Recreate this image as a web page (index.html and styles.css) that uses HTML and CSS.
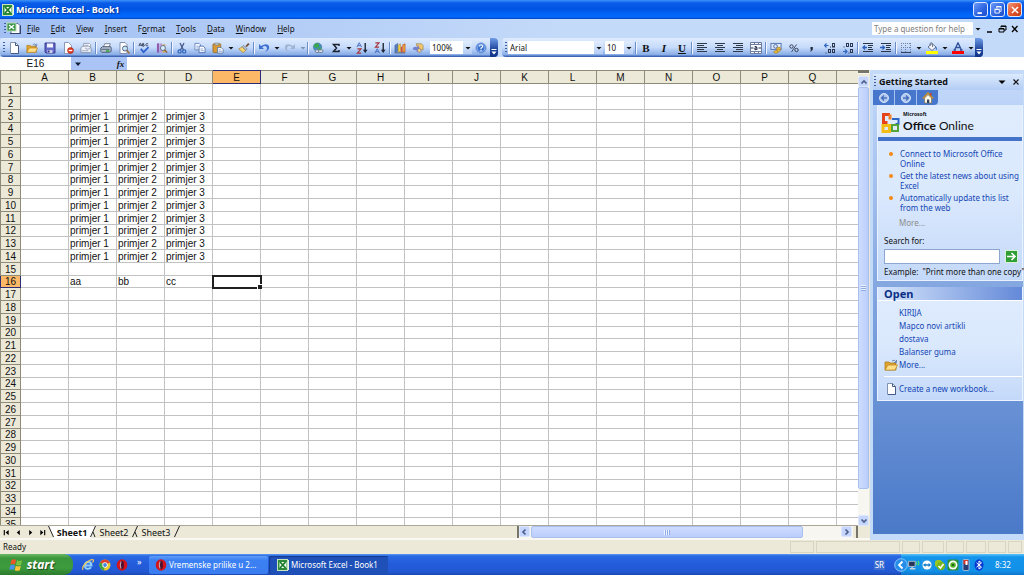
FILE: index.html
```html
<!DOCTYPE html>
<html lang="en">
<head>
<meta charset="utf-8">
<title>Microsoft Excel - Book1</title>
<link rel="stylesheet" href="styles.css">
</head>
<body>
<svg class="defs" aria-hidden="true">
  <symbol id="excel" viewBox="0 0 12 12"><rect x="1" y="1" width="11" height="10" fill="#e8f4e0"/><rect x=".5" y=".5" width="10" height="11" fill="#2e8b3a" stroke="#c6e4bd"/><path d="M2.500 3h7v6h-7z" fill="#f3fff0"/><path d="M3 3l5.500 6M8.500 3L3 9" stroke="#1c7a2a" stroke-width="1.800"/></symbol>
  <symbol id="page" viewBox="0 0 12 12"><path d="M2.500 .5h5l3 3v8h-8z" fill="#fff" stroke="#8290b0"/><path d="M7.500 .5v3h3M10.500 4v7.500h-7.500" fill="none" stroke="#455a86"/></symbol>
  <symbol id="folder" viewBox="0 0 14 12"><path d="M1 3h4l1 1h6v7H1z" fill="#dfa430" stroke="#a87410" stroke-width=".7"/><path d="M1 11l3-5h9.500l-2.500 5z" fill="#ffe08a" stroke="#b98118" stroke-width=".7"/><path d="M8 2q3-2 4 1M12.500 1v2.500h-2.500" fill="none" stroke="#56719e" stroke-width=".8"/></symbol>
  <symbol id="down" viewBox="0 0 6 6"><path d="M.5 2h5L3 4.500z" fill="currentColor"/></symbol>
  <symbol id="opera" viewBox="0 0 12 12"><ellipse cx="6" cy="6" rx="5.300" ry="5.700" fill="#d4141c"/><ellipse cx="6" cy="6" rx="1.900" ry="4.200" fill="#4a1230"/><path d="M5 2.500q-1.500 3.500 0 7" stroke="#fff" stroke-width=".7" fill="none"/></symbol>
  <symbol id="chev" viewBox="0 0 8 8"><path d="M1.500 5.500L4 3l2.500 2.500" fill="none" stroke="#4a5f8c" stroke-width="1.700"/></symbol>
  <symbol id="printer" viewBox="0 0 14 12"><path d="M4 5l1.500-4H12l-1.500 4z" fill="#fff" stroke="#5c6b88" stroke-width=".9"/><path d="M1 6l2-1.500h9.500l.5 1.500v4l-2 1H2l-1-1z" fill="#b4c0d0" stroke="#3f506c" stroke-width="1"/><path d="M2 7.500h9" stroke="#43546e"/></symbol>
</svg>

<div class="window">
  <header class="titlebar">
    <svg class="i12"><use href="#excel"/></svg>
    <h1>Microsoft Excel - Book1</h1>
    <button class="cap" aria-label="Minimize"><svg viewBox="0 0 16 16"><path d="M4 11.500h5" stroke="#fff" stroke-width="2"/></svg></button>
    <button class="cap" aria-label="Restore"><svg viewBox="0 0 16 16"><path d="M6.500 6V4.500h5v5H10M4.500 7.500h5v4h-5zM4 7h6M6 4h6" fill="none" stroke="#fff"/></svg></button>
    <button class="cap close" aria-label="Close"><svg viewBox="0 0 16 16"><path d="M4.500 4.500l7 7M11.500 4.500l-7 7" stroke="#fff" stroke-width="1.800"/></svg></button>
  </header>

  <nav class="menubar">
    <span class="grip"></span>
    <svg class="doc" viewBox="0 0 15 13"><path d="M5 1.500h7l2 2v8H5z" fill="#fff" stroke="#566a94"/><rect x="1" y="1" width="9" height="8" fill="#3b9447" stroke="#b8dcb4"/><path d="M3 3l5 4M8 3L3 7" stroke="#fff" stroke-width="1.400"/><path d="M4 11.500h10.500v-8" fill="none" stroke="#33476e" stroke-width="1.200"/></svg>
    <button><u>F</u>ile</button><button><u>E</u>dit</button><button><u>V</u>iew</button><button><u>I</u>nsert</button><button>F<u>o</u>rmat</button><button><u>T</u>ools</button><button><u>D</u>ata</button><button><u>W</u>indow</button><button><u>H</u>elp</button>
    <div class="combo ask"><input aria-label="Type a question for help" placeholder="Type a question for help"><button aria-label="Open help list"><svg><use href="#down"/></svg></button></div>
    <button class="mdi" aria-label="Minimize workbook"><svg viewBox="0 0 10 10"><path d="M3 8h5" stroke="#000" stroke-width="1.500"/></svg></button>
    <button class="mdi" aria-label="Restore workbook"><svg viewBox="0 0 10 10"><path d="M4 3.500V2h5v4H7M2 4.500h5V8H2zM2 5h5M4 2.400h5" fill="none" stroke="#000"/></svg></button>
    <button class="mdi" aria-label="Close workbook"><svg viewBox="0 0 10 10"><path d="M2 2l5.500 6M7.500 2L2 8" stroke="#000" stroke-width="1.300"/></svg></button>
  </nav>

  <div class="toolbars">
    <div class="toolbar standard">
      <span class="grip"></span>
      <button aria-label="New"><svg><use href="#page"/></svg></button>
      <button aria-label="Open"><svg><use href="#folder"/></svg></button>
      <button aria-label="Save"><svg viewBox="0 0 12 12"><path d="M1 1h10v10H2l-1-1z" fill="#6468c8" stroke="#3a3c90"/><path d="M3 1.500h6v4H3z" fill="#f1f3ff"/><path d="M3.500 8h5v3h-5z" fill="#c9cdee"/><path d="M4 8.500h1.500v2H4z" fill="#30336f"/></svg></button>
      <button aria-label="Permission"><svg viewBox="0 0 12 12"><path d="M2.500.5h4l3 3v8h-7z" fill="#fff" stroke="#8896b4"/><circle cx="8.500" cy="8.500" r="3" fill="#dc3a24" stroke="#a02010" stroke-width=".5"/><path d="M6.700 8.500h3.600" stroke="#fff" stroke-width="1.300"/></svg></button>
      <button aria-label="E-mail"><svg viewBox="0 0 13 12"><path d="M4 4V1h6l1.500 1.500V8H4z" fill="#fff" stroke="#7d8aa6" stroke-width=".8"/><path d="M1 5.500l2-1.500h7l2 2v4l-1 1H1z" fill="#eef1f7" stroke="#7784a2" stroke-width=".8"/><path d="M2 9h7M5 3h4M5.500 6l3 1.500L11 6" stroke="#8491ac" stroke-width=".8" fill="none"/></svg></button>
      <i class="sep"></i>
      <button aria-label="Print"><svg viewBox="0 0 14 12"><use href="#printer" width="14" height="12"/><path d="M7 9.500h4" stroke="#31a435" stroke-width="1.800"/></svg></button>
      <button aria-label="Print Preview"><svg viewBox="0 0 12 12"><path d="M2 .5h5l2 2v9H2z" fill="#fff" stroke="#8390ad"/><circle cx="7" cy="6.500" r="2.500" fill="#c9e5f5" stroke="#536683"/><path d="M9 8.500l2.500 3" stroke="#a26c32" stroke-width="1.500"/></svg></button>
      <i class="sep"></i>
      <button aria-label="Spelling"><svg viewBox="0 0 13 12"><path d="M1 4l1-3h1l1 3M1.500 3h2M5 1v3h1.500q1-1 0-1.500H5h1q1-1 0-1.500H5M11 1.500q-2.500-1-2.500 1t2.500 1" fill="none" stroke="#343c56" stroke-width=".9"/><path d="M3 7l3 3.500L11.500 5" fill="none" stroke="#2f62cf" stroke-width="1.900"/></svg></button>
      <button aria-label="Research"><svg viewBox="0 0 13 12"><path d="M1 1h2.500v10H1z" fill="#8e5db0"/><path d="M4 1h2.500v10H4z" fill="#c09ad5"/><path d="M7 2h3v9H7z" fill="#d2a457"/><circle cx="7.500" cy="6" r="2.700" fill="#d8effb" stroke="#587090"/><path d="M9.500 8l2.500 3" stroke="#8e602d" stroke-width="1.500"/></svg></button>
      <i class="sep"></i>
      <button aria-label="Cut"><svg viewBox="0 0 12 12"><path d="M4 1l3.500 7M8 1L4.500 8" stroke="#46598a" stroke-width="1.300"/><circle cx="3.600" cy="9.400" r="1.600" fill="none" stroke="#2d63ba" stroke-width="1.200"/><circle cx="8.200" cy="9.400" r="1.600" fill="none" stroke="#2d63ba" stroke-width="1.200"/></svg></button>
      <button aria-label="Copy"><svg viewBox="0 0 13 12"><path d="M1 1h4.500L7 2.500V8H1z" fill="#f6f9ff" stroke="#5f7cb9" stroke-width=".9"/><path d="M5.500 4H10l2 2v5H5.500z" fill="#fff" stroke="#4769ad" stroke-width=".9"/><path d="M7 7h3M7 9h4M2.500 4h2M2.500 6h2" stroke="#6f8dca" stroke-width=".8"/></svg></button>
      <button aria-label="Paste"><svg viewBox="0 0 13 12"><rect x="1" y="1.500" width="8.500" height="9.500" rx="1" fill="#d69b38" stroke="#8b641e" stroke-width=".8"/><path d="M3 .7h4.500v2H3z" fill="#d8dbe2" stroke="#636873" stroke-width=".6"/><path d="M6 5.500h4l2 2v4H6z" fill="#fff" stroke="#526c9e" stroke-width=".8"/><path d="M7 8h3M7 9.700h4" stroke="#6a84ba" stroke-width=".7"/></svg></button>
      <button class="drop" aria-label="Paste options"><svg><use href="#down"/></svg></button>
      <button aria-label="Format Painter"><svg viewBox="0 0 13 12"><path d="M8 4l3-3.500L12.500 2 9.500 5z" fill="#704a2c"/><path d="M6 3l4 4-1.500 1.500-4-4z" fill="#b8bfca" stroke="#65708a" stroke-width=".6"/><path d="M4.300 4.800l4 4L5.500 11 .8 7z" fill="#f6d46e" stroke="#a28333" stroke-width=".7"/></svg></button>
      <i class="sep"></i>
      <button aria-label="Undo"><svg viewBox="0 0 12 12"><path d="M1 2v5h5L4.200 5.200Q8 2.500 9 6q.5 2-2 4 5-2 4-6Q9 .5 3 4z" fill="#3d70cf"/></svg></button>
      <button class="drop" aria-label="Undo list"><svg><use href="#down"/></svg></button>
      <button aria-label="Redo" disabled><svg viewBox="0 0 12 12"><path d="M11 2v5H6l1.800-1.800Q4 2.500 3 6q-.5 2 2 4Q0 8 1 4 3 .5 9 4z" fill="#a0b3d2"/></svg></button>
      <button class="drop dim" aria-label="Redo list" disabled><svg><use href="#down"/></svg></button>
      <i class="sep"></i>
      <button aria-label="Insert Hyperlink"><svg viewBox="0 0 13 12"><circle cx="6" cy="5" r="4.500" fill="#408bcb" stroke="#376c76" stroke-width=".6"/><path d="M3 1.500l4-.5 1 3-3 2-3-1zM6 6l3-1 1 2-3 2z" fill="#39a94b"/><rect x="3.500" y="8" width="4.500" height="2.800" rx="1.400" fill="#dfe7f2" stroke="#63748a"/><rect x="7" y="8" width="5" height="2.800" rx="1.400" fill="#dfe7f2" stroke="#63748a"/></svg></button>
      <button aria-label="AutoSum"><svg viewBox="0 0 12 12"><path d="M9 4V2.500H3.500L6.500 6l-3 3.500H9V8" fill="none" stroke="#1d2430" stroke-width="1.500"/></svg></button>
      <button class="drop" aria-label="AutoSum options"><svg><use href="#down"/></svg></button>
      <button aria-label="Sort Ascending"><svg viewBox="0 0 13 13"><path d="M1 5.500L3.500.8 6 5.500M2 4h3" fill="none" stroke="#3f68b8"/><path d="M1.500 7.500h4l-4 4.500h4" fill="none" stroke="#a53539" stroke-width="1.200"/><path d="M10 1v9" stroke="#1f2736" stroke-width="1.500"/><path d="M7.500 8.500h5L10 12z" fill="#1f2736"/></svg></button>
      <button aria-label="Sort Descending"><svg viewBox="0 0 13 13"><path d="M1 12l2.500-4.700L6 12M2 10.500h3" fill="none" stroke="#3f68b8"/><path d="M1.500 1h4l-4 4.500h4" fill="none" stroke="#a53539" stroke-width="1.200"/><path d="M10 1v9" stroke="#1f2736" stroke-width="1.500"/><path d="M7.500 8.500h5L10 12z" fill="#1f2736"/></svg></button>
      <i class="sep"></i>
      <button aria-label="Chart Wizard"><svg viewBox="0 0 13 12"><path d="M1 3l3-2v8.500L1 11z" fill="#557dc4" stroke="#32518c" stroke-width=".5"/><path d="M4.500 3L7 1.500V10H4.500z" fill="#f6cf45" stroke="#9a7c18" stroke-width=".5"/><path d="M7.500 5L9 4v7H7.500z" fill="#d94d34"/><path d="M9.500 2.500l2.500-1v9H9.500z" fill="#f0ad38" stroke="#b63b25" stroke-width=".6"/><path d="M1 11.300h11" stroke="#555f75"/></svg></button>
      <button aria-label="Drawing"><svg viewBox="0 0 14 12"><path d="M5 1h6l2 2v5H7z" fill="#efc669" stroke="#87713f" stroke-width=".6"/><path d="M7 2l3 8H5z" fill="#857ac8"/><ellipse cx="4" cy="6.500" rx="3" ry="2" fill="#6f82d1"/><path d="M6 8l3-2 2 4-3 1.500z" fill="#f2d48a" stroke="#6a5f75" stroke-width=".6"/></svg></button>
      <div class="combo zoom"><input aria-label="Zoom" value="100%"><button aria-label="Zoom list"><svg><use href="#down"/></svg></button></div>
      <button aria-label="Help"><svg viewBox="0 0 12 12"><circle cx="6" cy="6" r="5.200" fill="#3a72cf" stroke="#88a9e5"/><circle cx="6" cy="6" r="3.900" fill="none" stroke="#b7d0f8" stroke-width=".6"/><path d="M4.300 4.500Q4.500 3 6 3t1.700 1.500Q7.600 5.400 6 6.200V7.200M6 8v1.200" fill="none" stroke="#fff" stroke-width="1.100"/></svg></button>
      <button class="end" aria-label="Standard toolbar options"><svg viewBox="0 0 6 8"><path d="M.5 2.500h5" stroke="#fff"/><path d="M.5 4.500h5L3 7.500z" fill="#fff"/></svg></button>
    </div>
    <div class="toolbar format">
      <span class="grip"></span>
      <div class="combo font"><input aria-label="Font" value="Arial"><button aria-label="Font list"><svg><use href="#down"/></svg></button></div>
      <div class="combo size"><input aria-label="Font size" value="10"><button aria-label="Size list"><svg><use href="#down"/></svg></button></div>
      <i class="sep"></i>
      <button class="glyph" aria-label="Bold"><b>B</b></button>
      <button class="glyph" aria-label="Italic"><em>I</em></button>
      <button class="glyph" aria-label="Underline"><u>U</u></button>
      <i class="sep"></i>
      <button aria-label="Align Left"><svg viewBox="0 0 12 12"><path d="M1 1.500h10M1 3.500h7M1 5.500h10M1 7.500h7M1 9.500h10" stroke="#303a4b"/></svg></button>
      <button aria-label="Center"><svg viewBox="0 0 12 12"><path d="M1 1.500h10M3 3.500h6M1 5.500h10M3 7.500h6M1 9.500h10" stroke="#303a4b"/></svg></button>
      <button aria-label="Align Right"><svg viewBox="0 0 12 12"><path d="M1 1.500h10M4 3.500h7M1 5.500h10M4 7.500h7M1 9.500h10" stroke="#303a4b"/></svg></button>
      <button aria-label="Merge and Center"><svg viewBox="0 0 12 12"><path d="M.5 .5h11v11H.5zM.5 2.500h11M.5 9.500h11M4.500.5v2M8.500 .5v2M4.500 9.500v2M8.500 9.500v2" fill="#f7faff" stroke="#6c7d9f"/><path d="M1 6h2.500M8.500 6H11M4.700 4.500Q7.200 4 7 7.800M7 5.800Q4.500 5.500 4.800 7.200q1.200 1 2.200-.5" fill="none" stroke="#27334c" stroke-width="1.100"/></svg></button>
      <i class="sep"></i>
      <button aria-label="Currency Style"><svg viewBox="0 0 13 12"><rect x="1" y="1" width="11" height="6.500" fill="#dfe8f8" stroke="#4d6faf"/><circle cx="6" cy="4.200" r="2" fill="none" stroke="#4568a8"/><ellipse cx="9.500" cy="6.500" rx="2.300" ry="1.300" fill="#edc34a" stroke="#956d17" stroke-width=".6"/><ellipse cx="9" cy="8.500" rx="2.300" ry="1.300" fill="#edc34a" stroke="#956d17" stroke-width=".6"/><ellipse cx="6.500" cy="10.300" rx="2.500" ry="1.300" fill="#edc34a" stroke="#956d17" stroke-width=".6"/></svg></button>
      <button aria-label="Percent Style"><svg viewBox="0 0 12 12"><circle cx="3.500" cy="4.500" r="1.700" fill="none" stroke="#36415a"/><circle cx="8.500" cy="8" r="1.700" fill="none" stroke="#36415a"/><path d="M8.500 2.500L3.500 10" stroke="#36415a" stroke-width=".9"/></svg></button>
      <button aria-label="Comma Style"><svg viewBox="0 0 12 12"><path d="M4.500 5h2.300v2.500L5 9.500H4.200l.9-2h-.6z" fill="#20293a"/></svg></button>
      <button aria-label="Increase Decimal"><svg viewBox="0 0 12 12"><path d="M.5 3.500h4M2.500 1.500l-2 2 2 2" fill="none" stroke="#3067c2" stroke-width="1.200"/><path d="M6 5h1M1.500 11h1" stroke="#2b3750" stroke-width="1.200"/><rect x="8.500" y="1.500" width="2" height="3.500" fill="none" stroke="#2b3750"/><rect x="4.500" y="7.500" width="2" height="3" fill="none" stroke="#2b3750"/><rect x="8.500" y="7.500" width="2" height="3" fill="none" stroke="#2b3750"/></svg></button>
      <button aria-label="Decrease Decimal"><svg viewBox="0 0 12 12"><path d="M1 9.500h4M3 7.500l2 2-2 2" fill="none" stroke="#3067c2" stroke-width="1.200"/><path d="M1.500 5h1M6.500 11h1" stroke="#2b3750" stroke-width="1.200"/><rect x="4.500" y="1.500" width="2" height="3" fill="none" stroke="#2b3750"/><rect x="8.500" y="1.500" width="2" height="3" fill="none" stroke="#2b3750"/><rect x="8.500" y="7.500" width="2" height="3" fill="none" stroke="#2b3750"/></svg></button>
      <i class="sep"></i>
      <button aria-label="Decrease Indent"><svg viewBox="0 0 12 12"><path d="M1 1.500h10M6 3.500h5M6 5.500h4M6 7.500h5M1 9.500h10" stroke="#2b3548"/><path d="M5 5.500H1M3 3.500l-2 2 2 2" fill="none" stroke="#2e61bd" stroke-width="1.300"/></svg></button>
      <button aria-label="Increase Indent"><svg viewBox="0 0 12 12"><path d="M1 1.500h10M6 3.500h5M6 5.500h4M6 7.500h5M1 9.500h10" stroke="#2b3548"/><path d="M0 5.500h4M2.500 3.500l2 2-2 2" fill="none" stroke="#2e61bd" stroke-width="1.300"/></svg></button>
      <i class="sep"></i>
      <button aria-label="Borders"><svg viewBox="0 0 12 12"><path d="M1 1.500h10M1 5.500h10M1.500 1v9.500M5.500 1v9.500M10.500 1v9.500" stroke="#7182a5" stroke-dasharray="1 1"/><path d="M1 10.500h10" stroke="#35425a"/></svg></button>
      <button class="drop" aria-label="Border options"><svg><use href="#down"/></svg></button>
      <button aria-label="Fill Color"><svg viewBox="0 0 12 12"><path d="M2 5l4-3.500L10 5 6 8.500z" fill="#f2f4f9" stroke="#5a6a87" stroke-width=".9"/><path d="M4 4V1.500Q5.500-.5 6.500 2v3" fill="none" stroke="#59677f" stroke-width=".8"/><path d="M9.500 4q2 1.500 1.500 4Q9 7 9.500 4z" fill="#3c74cd"/><path d="M0 9h12v3H0z" fill="#ffff00"/></svg></button>
      <button class="drop" aria-label="Fill color options"><svg><use href="#down"/></svg></button>
      <button aria-label="Font Color"><svg viewBox="0 0 12 12"><path d="M2.500 8L6 .8 9.500 8M4 5.500h4M1.500 8H4M8 8h2.500" fill="none" stroke="#31519b" stroke-width="1.300"/><path d="M0 9h12v3H0z" fill="#f00"/></svg></button>
      <button class="drop" aria-label="Font color options"><svg><use href="#down"/></svg></button>
      <button class="end" aria-label="Formatting toolbar options"><svg viewBox="0 0 6 8"><path d="M.5 2.500h5" stroke="#fff"/><path d="M.5 4.500h5L3 7.500z" fill="#fff"/></svg></button>
    </div>
  </div>

  <div class="formulabar">
    <input class="namebox" aria-label="Name box" value="E16">
    <div class="fxarea"><button aria-label="Name list"><svg viewBox="0 0 8 8"><path d="M1 2.500h6L4 6z" fill="#111c33"/></svg></button><button class="fx" aria-label="Insert function"><i>fx</i></button></div>
    <input class="formula" aria-label="Formula">
  </div>

  <main class="main">
    <section class="book">
      <div class="view">
        <div class="gridwrap"><table class="grid" id="grid"></table></div>
        <div class="vscroll">
          <span class="vsplit"></span>
          <button aria-label="Scroll up"><svg><use href="#chev"/></svg></button>
          <div class="vtrack"><span class="vthumb"></span></div>
          <button aria-label="Scroll down"><svg class="r180"><use href="#chev"/></svg></button>
        </div>
      </div>
      <div class="tabrow">
        <div class="tabs">
          <button aria-label="First sheet"><svg viewBox="0 0 8 8"><path d="M1.500 1v6" stroke="#000" stroke-width="1.300"/><path d="M6.500 1v6L3 4z"/></svg></button>
          <button aria-label="Previous sheet"><svg viewBox="0 0 8 8"><path d="M5.500 1v6L2 4z"/></svg></button>
          <button aria-label="Next sheet"><svg viewBox="0 0 8 8"><path d="M2.500 1v6L6 4z"/></svg></button>
          <button aria-label="Last sheet"><svg viewBox="0 0 8 8"><path d="M6.500 1v6" stroke="#000" stroke-width="1.300"/><path d="M1.500 1v6L5 4z"/></svg></button>
          <svg class="slash" viewBox="0 0 6 12"><path d="M0 0h6v12z" fill="#fff"/><path d="M.5 0l5 11" stroke="#222"/></svg>
          <button class="tab on">Sheet1</button>
          <svg class="slash" viewBox="0 0 6 12"><path d="M0 0h6L1 12H0z" fill="#fff"/><path d="M5.500 0l-5 11M3 6l2 5" stroke="#222"/></svg>
          <button class="tab">Sheet2</button>
          <svg class="slash" viewBox="0 0 6 12"><path d="M5.500 0l-5 11M3 6l2 5" stroke="#222"/></svg>
          <button class="tab">Sheet3</button>
          <svg class="slash" viewBox="0 0 6 12"><path d="M5.500 0l-5 11" stroke="#222"/></svg>
        </div>
        <div class="hscroll">
          <button aria-label="Scroll left"><svg class="r270"><use href="#chev"/></svg></button>
          <div class="htrack"><span class="hthumb"></span></div>
          <button aria-label="Scroll right"><svg class="r90"><use href="#chev"/></svg></button>
          <span class="hsplit"></span>
        </div>
      </div>
    </section>

    <aside class="pane">
      <div class="panehead"><span class="grip"></span><h2>Getting Started</h2>
        <button aria-label="Other task panes"><svg viewBox="0 0 8 8"><path d="M.5 2.500h7L4 6z"/></svg></button>
        <button aria-label="Close pane"><svg viewBox="0 0 8 8"><path d="M1.500 1.500l5 5M6.500 1.500l-5 5" stroke="#111" stroke-width="1.200"/></svg></button>
      </div>
      <div class="panebody">
        <div class="panenav">
          <button aria-label="Back"><svg viewBox="0 0 12 12"><circle cx="6" cy="6" r="4.500" fill="#b4caef" stroke="#d3e2fa"/><path d="M9 6H3.500M6 3.500L3.500 6 6 8.500" fill="none" stroke="#456fbd" stroke-width="1.300"/></svg></button>
          <button aria-label="Forward"><svg viewBox="0 0 12 12"><circle cx="6" cy="6" r="4.500" fill="#b4caef" stroke="#d3e2fa"/><path d="M3 6h5.500M6 3.500L8.500 6 6 8.500" fill="none" stroke="#456fbd" stroke-width="1.300"/></svg></button>
          <button aria-label="Home"><svg viewBox="0 0 12 12"><path d="M2.500 6v5h7V6L6 2.500z" fill="#fffbe8" stroke="#816e4c" stroke-width=".7"/><path d="M.8 6.500L6 1l5.200 5.500" fill="none" stroke="#c79030" stroke-width="1.500"/><path d="M8.800 1v2.500" stroke="#c34224" stroke-width="1.500"/><path d="M5 7.500h2.300V11H5z" fill="#35425b"/></svg></button>
        </div>
        <div class="card online">
          <div class="logo">
            <svg viewBox="0 0 20 22"><g fill="none" stroke-width="3"><path d="M9 2.500H2.500v8h4" stroke="#e5431d"/><path d="M9 2.500v5" stroke="#f18129"/><path d="M11 7h6.500v5h-3" stroke="#2c67c5" stroke-width="2"/><path d="M2 13.500v6h6.500v-6z" stroke="#f4bc16"/><path d="M11 13h6v6h-6z" stroke="#55a53a" stroke-width="2"/></g></svg>
            <div class="wordmark"><small>Microsoft</small><span><b>Office</b> Online</span></div>
          </div>
          <ul>
            <li><a href="#">Connect to Microsoft Office Online</a></li>
            <li><a href="#">Get the latest news about using Excel</a></li>
            <li><a href="#">Automatically update this list from the web</a></li>
          </ul>
          <a class="more" href="#">More...</a>
          <form class="search">
            <label for="q">Search for:</label>
            <div class="searchrow"><input id="q"><button type="button" aria-label="Go"><svg viewBox="0 0 13 13"><path d="M2 6.500h8M6.500 3L10 6.500 6.500 10" fill="none" stroke="#fff" stroke-width="1.600"/></svg></button></div>
            <p>Example:&nbsp; "Print more than one copy"</p>
          </form>
        </div>
        <div class="card open">
          <h3>Open</h3>
          <nav class="recent">
            <a href="#">KIRIJA</a><a href="#">Mapco novi artikli</a><a href="#">dostava</a><a href="#">Balanser guma</a>
          </nav>
          <a class="withicon" href="#"><svg><use href="#folder"/></svg>More...</a>
          <hr>
          <a class="withicon" href="#"><svg><use href="#page"/></svg>Create a new workbook...</a>
        </div>
      </div>
    </aside>
  </main>

  <footer class="status"><span>Ready</span><i class="p24"></i><i class="p84"></i><i class="p18"></i><i class="p22"></i><i class="p18"></i><i class="p20"></i><i class="p18"></i><i class="p14"></i></footer>

  <div class="taskbar">
    <button class="start"><svg viewBox="0 0 15 14"><path d="M2.500 2Q5 .5 7 2L6 6.500Q4 5 1.500 6.500z" fill="#ee5528"/><path d="M8 2.300q2 1.500 5 0L12 7Q9 8 7 6.700z" fill="#7cc343"/><path d="M1.300 7.500Q4 6 5.800 7.500L5 12Q3 10.500.3 12z" fill="#4b91ef"/><path d="M6.800 7.700q2.200 1.500 5 0l-1 4.500q-2.500 1.300-5 0z" fill="#fac636"/></svg>start</button>
    <div class="quick">
      <button aria-label="Internet Explorer"><svg viewBox="0 0 12 12"><path d="M3 6.500h6.500Q9.300 3 6.200 3 3 3 3 6.500t3 3.300q2 0 3-1.500" fill="none" stroke="#8ed0ff" stroke-width="2"/><path d="M1 11Q-.5 8 4 4 9-.5 11.500 1q.5 1-1 2.500" fill="none" stroke="#f2c757" stroke-width="1.100"/></svg></button>
      <button aria-label="Chrome"><svg viewBox="0 0 12 12"><circle cx="6" cy="6" r="5.500" fill="#e9c82f"/><path d="M6 6L1 3.500Q3 .5 6 .5t5 3z" fill="#de3f2d"/><path d="M6 6l-1 5.500Q-1 9.500 1 3.500z" fill="#41a53f"/><circle cx="6" cy="6" r="2.700" fill="#fff"/><circle cx="6" cy="6" r="1.900" fill="#4187df"/></svg></button>
      <button aria-label="Opera"><svg><use href="#opera"/></svg></button>
      <span>»</span>
    </div>
    <button class="task"><svg class="i12"><use href="#opera"/></svg>Vremenske prilike u 2...</button>
    <button class="task active"><svg class="i12"><use href="#excel"/></svg>Microsoft Excel - Book1</button>
    <span class="lang">SR</span>
    <div class="tray">
      <button aria-label="Show hidden icons"><svg viewBox="0 0 14 14"><circle cx="7" cy="7" r="6.300" fill="#258de8" stroke="#a3d5ff" stroke-width=".8"/><path d="M8.500 3.500L5 7l3.500 3.500" fill="none" stroke="#fff" stroke-width="1.800"/></svg></button>
      <svg viewBox="0 0 13 12"><rect x=".7" y="2" width="7" height="5.500" fill="#263557" stroke="#aebbd1"/><path d="M2 10h6M4.500 8v2" stroke="#c9d1dc" stroke-width="1.500"/><path d="M9 2.500q1 1.700 0 3.500M11 1.500q1.700 2.500 0 5" fill="none" stroke="#6cf04b"/></svg>
      <svg viewBox="0 0 12 12"><rect x=".5" y=".5" width="11" height="11" rx="2" fill="#2196e5"/><circle cx="6" cy="6" r="4.500" fill="#fff"/><path d="M2 6l2.500-2v1.300h3V4L10 6 7.500 8V6.700h-3V8z" fill="#127bc8"/></svg>
      <svg viewBox="0 0 12 12"><rect x="1" y="1" width="7" height="7" rx="2.500" fill="#9bc71e"/><circle cx="7" cy="7" r="4.300" fill="#79b51c"/><path d="M4.500 7L6.500 9l3-4" fill="none" stroke="#fff" stroke-width="1.500"/></svg>
      <svg viewBox="0 0 12 12"><rect x=".5" y=".5" width="11" height="11" rx="1.500" fill="#2f9138"/><circle cx="6" cy="6" r="4.500" fill="#fff"/><circle cx="6" cy="6" r="2.800" fill="#56b325"/><circle cx="6" cy="6" r="1" fill="#16481a"/></svg>
      <svg viewBox="0 0 12 12"><rect x="3" y=".5" width="6" height="11" rx="1" fill="#293e77" stroke="#d4d8e5" stroke-width=".7"/><path d="M3.500 1H8v4H3.500z" fill="#d83b2e"/><path d="M5.500 2h2v4h-2z" fill="#fff"/></svg>
      <svg viewBox="0 0 12 12"><ellipse cx="6" cy="6" rx="4.500" ry="5.700" fill="#0639d4"/><path d="M3.500 3.800l5 4.400L6 10V2l2.500 1.800-5 4.400" fill="none" stroke="#fff"/></svg>
      <time>8:32</time>
    </div>
  </div>
</div>
<script src="app.js"></script>
</body>
</html>
```

FILE: app.js
```js
const COLUMNS = 'ABCDEFGHIJKLMNOPQR'.split('');
const ROWS = 35;
const active = { column: 'E', row: 16 };
const cells = { B16: 'aa', C16: 'bb', D16: 'cc' };

for (let row = 3; row <= 14; row++) {
  ['B', 'C', 'D'].forEach((column, i) => {
    cells[column + row] = 'primjer ' + (i + 1);
  });
}

const make = (tag, text, className) => {
  const node = document.createElement(tag);
  if (text) node.textContent = text;
  if (className) node.className = className;
  return node;
};

const grid = document.getElementById('grid');
const head = grid.createTHead().insertRow();
head.append(make('th', '', 'corner'));
COLUMNS.forEach(c => {
  const label = c === 'R' ? '' : c;
  head.append(make('th', label, c === active.column ? 'sel' : ''));
});

const body = grid.createTBody();
for (let row = 1; row <= ROWS; row++) {
  const line = body.insertRow();
  line.append(make('th', String(row), row === active.row ? 'sel' : ''));
  COLUMNS.forEach(c => {
    const isActive = c === active.column && row === active.row;
    line.append(make('td', cells[c + row] || '', isActive ? 'cursor' : ''));
  });
}
```

FILE: styles.css
```css
* { box-sizing: border-box; }
body { margin: 0; font: 8px/10px "Noto Sans", sans-serif; color: #111; }
h1, h2, h3, p, ul { margin: 0; padding: 0; }
button, input { font: inherit; color: inherit; border: 0; padding: 0; margin: 0; background: none; min-width: 0; border-radius: 0; outline: 0; }
button { display: flex; align-items: center; justify-content: center; flex: none; white-space: nowrap; }
a { color: #1446b4; text-decoration: none; }
svg { flex: none; display: block; }
.defs { position: absolute; width: 0; height: 0; }
.i12 { width: 12px; height: 12px; }
.window { height: 100vh; display: flex; flex-direction: column; overflow: hidden; background: #c4daf9; }

.titlebar { flex: none; height: 19px; display: flex; align-items: center; gap: 2px; padding: 0 2px; background: linear-gradient(#3c92f8 0, #0a5ce8 3px, #0054e3 9px, #0367fb 15px, #0468fc 17px, #0546bd 19px); }
.titlebar h1 { flex: 1; font: bold 9px/14px "Open Sans", sans-serif; color: #fff; text-shadow: 1px 1px 1px #0a318c; }
.cap { width: 15px; height: 15px; border: 1px solid #dce8ff; border-radius: 3px; background: linear-gradient(135deg, #6f9cf8, #2a62e0 60%, #1c4fcb); }
.cap svg { width: 14px; height: 14px; }
.close { background: linear-gradient(135deg, #f09a7d, #e1532b 55%, #c33c14); }

.grip { flex: none; width: 2px; height: 12px; background: repeating-linear-gradient(#3f5f9f 0 1px, transparent 1px 3px); }
.menubar { flex: none; height: 19px; display: flex; align-items: center; padding: 0 3px 0 4px; background: linear-gradient(90deg, #a1bff3, #c4daf9 55%); }
.menubar > button { padding: 0 5px 0 6px; height: 14px; }
.menubar .doc { width: 15px; height: 13px; margin: 0; }
.menubar .mdi { width: 13px; padding: 0; }
.mdi svg { width: 10px; height: 10px; }
.combo { display: flex; height: 13px; background: #fff; }
.combo input { flex: 1; width: 0; padding: 0 2px; }
.combo button { width: 9px; background: linear-gradient(#e2edfd, #b4cdf5); }
.combo svg, .drop svg { width: 6px; height: 6px; }
.menubar .ask { margin-left: auto; width: 110px; }
.ask input::placeholder { color: #808080; opacity: 1; }
.ask button { background: #c4daf9; }

.toolbars { flex: none; display: flex; gap: 3px; height: 19px; }
.toolbar { display: flex; align-items: center; height: 19px; padding-left: 3px; border-radius: 4px; background: linear-gradient(#dfebfe, #c5dafa 50%, #86abe6 17px, #3f66b4 18px, #3f66b4); }
.toolbar > button { width: 18px; height: 16px; }
.toolbar > button > svg { width: 12px; height: 12px; }
.toolbar > .drop { width: 8px; }
.toolbar > .drop svg { width: 6px; height: 6px; }
.drop.dim { color: #8093b5; }
.sep { flex: none; width: 2px; height: 12px; border-left: 1px solid #6a8ccb; border-right: 1px solid #f1f6ff; }
.zoom { width: 42px; margin-left: 3px; }
.font { width: 95px; margin-left: 1px; }
.size { width: 28px; margin: 0 2px; }
.format { margin-left: 1px; }
.toolbar > .end { width: 8px; height: 19px; align-items: flex-end; padding-bottom: 2px; border-radius: 0 4px 4px 0; background: linear-gradient(#6f9be8, #1f459b 60%, #0f3488); }
.toolbar > .end svg { width: 6px; height: 8px; }
.glyph { font: bold 11px/12px "Liberation Serif", serif; }
.glyph b { font-weight: 900; }

.formulabar { flex: none; display: flex; height: 13px; background: #fff; }
.namebox { width: 71px; text-align: center; font: 10px/12px "Liberation Sans", sans-serif; }
.fxarea { display: flex; justify-content: space-between; width: 56px; padding: 0 2px; background: #a9c4f5; }
.fxarea svg { width: 8px; height: 8px; }
.fxarea button { width: 9px; }
.fx { font: bold italic 9px/12px "Liberation Serif", serif; }
.formula { flex: 1; }

.main { flex: 1; min-height: 0; display: flex; }
.book { flex: 1; min-width: 0; display: flex; flex-direction: column; background: #ece9d8; }
.view { flex: 1; min-height: 0; display: flex; }
.gridwrap { flex: 1; min-width: 0; overflow: hidden; background: #fff; border-bottom: 1px solid #aca899; }
.grid { table-layout: fixed; width: 885px; border-collapse: separate; border-spacing: 0; font: 10px/11px "Liberation Sans", sans-serif; }
.grid th, .grid td { width: 48px; height: 13px; padding: 0; overflow: visible; white-space: nowrap; border: solid #c2c2c2; border-width: 0 1px 1px 0; }
.grid tr:nth-child(4n) > * { height: 12px; }
.grid tbody tr { height: 13px; }
.grid tbody tr:nth-child(4n) { height: 12px; line-height: 10px; }
.grid th { font-weight: normal; background: #ece9d8; border-color: #8e8b78; }
.grid thead th { height: 14px; border-top: 1px solid #8e8b78; }
.grid th:first-child { width: 21px; border-left: 1px solid #8e8b78; }
.grid td { padding-left: 1px; }
.grid th.sel { background: #fdb867; border-color: #2b2b78; }
.grid .cursor { position: relative; outline: 2px solid #202020; outline-offset: -1px; }
.cursor::after { content: ""; position: absolute; right: -2px; bottom: -2px; width: 4px; height: 4px; background: #202020; border: solid #fff; border-width: 1px 0 0 1px; }

.vscroll { flex: none; width: 12px; display: flex; flex-direction: column; background: #f7f6f1; border-right: 1px solid #ece9d8; }
.vsplit { height: 6px; border-bottom: 2px solid #ece9d8; border-top: 3px solid #77746a; }
.vscroll button, .hscroll button { width: 11px; height: 11px; border-radius: 2px; background: #c5d5fb; border: 1px solid #dce6fd; }
.vscroll svg, .hscroll svg { width: 8px; height: 8px; }
.vtrack { flex: 1; display: flex; }
.vthumb { width: 11px; height: 94%; border: 1px solid #a9c0ef; border-radius: 2px; background: repeating-linear-gradient(#eef4ff 0 1px, #8eabe8 1px 2px) center / 5px 6px no-repeat, linear-gradient(90deg, #cedcff, #bacdfb); }
.r90 { transform: rotate(90deg); }
.r180 { transform: rotate(180deg); }
.r270 { transform: rotate(270deg); }

.tabrow { flex: none; height: 14px; display: flex; border-bottom: 2px solid #f9f8f3; }
.tabs { flex: 61; display: flex; }
.tabs > button:not(.tab) { width: 12px; }
.tabs > button svg { width: 7px; height: 7px; }
.slash { width: 6px; height: 12px; }
.tab { width: 36px; font: 9px/11px "Noto Sans", sans-serif; }
.tab.on { background: #fff; font-weight: bold; }
.hscroll { flex: 40; display: flex; border-left: 2px solid #77746a; background: linear-gradient(90deg, #f7f6f1 96%, #ece9d8 96%); padding-right: 12px; gap: 1px; }
.htrack { flex: 1; display: flex; }
.hthumb { width: 88%; border: 1px solid #a9c0ef; border-radius: 2px; background: repeating-linear-gradient(90deg, #eef4ff 0 1px, #8eabe8 1px 2px) center / 6px 5px no-repeat, linear-gradient(#cedcff, #bacdfb); }
.hsplit { width: 5px; border-right: 2px solid #77746a; background: #ece9d8; }

.pane { flex: none; width: 154px; display: flex; flex-direction: column; padding: 4px 1px 6px 3px; background: #c4daf9; }
.panehead { flex: none; height: 16px; display: flex; align-items: center; gap: 3px; padding: 0 2px 0 1px; background: linear-gradient(#dceafd, #b3cdf5); }
.panehead h2 { flex: 1; font: bold 9px/12px "Open Sans", sans-serif; }
.panehead button { width: 11px; }
.panehead svg { width: 8px; height: 8px; }
.panebody { flex: 1; display: flex; flex-direction: column; gap: 6px; padding-left: 4px; background: linear-gradient(#c0d7f9, #83a6e0 45%, #4a79c8); }
.panenav { align-self: flex-start; display: flex; height: 15px; width: 65px; margin: 0 0 -6px -4px; background: #4777cc; border-radius: 0 0 4px 0; }
.panenav button { flex: 1; }
.panenav button + button { border-left: 1px solid #a7c2ee; }
.panenav svg { width: 12px; height: 12px; }
.card { background: linear-gradient(#dfecfe, #dbe9fd 50%, #c4d9f9); border: 1px solid #eaf2ff; border-top: 0; }
.logo { height: 36px; display: flex; gap: 2px; padding: 7px 0 0 3px; border-bottom: 4px solid #4374c9; }
.logo svg { width: 20px; height: 22px; }
.wordmark { display: flex; flex-direction: column; gap: 1px; color: #111; }
.wordmark small { font: bold 5px/5px "Noto Sans", sans-serif; }
.wordmark span { font: 12px/15px Lato, sans-serif; white-space: nowrap; }
.online ul { list-style: none; padding: 8px 2px 0 11px; }
.online li { display: flex; margin-bottom: 2px; }
.online li::before { content: ""; flex: none; width: 4px; height: 4px; margin: 3px 7px 0 0; border-radius: 50%; background: #f48a12; }
.online a { white-space: normal; }
.online .more { display: block; padding-left: 21px; margin-top: 5px; color: #8d8d8d; }
.search { padding: 8px 4px 3px 6px; }
.searchrow { display: flex; align-items: center; gap: 5px; margin: 3px 0; }
.searchrow input { flex: 1; height: 15px; border: 1px solid #8ca6cf; background: #fff; }
.searchrow button { width: 13px; height: 13px; background: #2f9e35; border: 1px solid #d8f0d5; }
.searchrow svg { width: 13px; height: 13px; }
.search p { white-space: nowrap; }
.open h3 { height: 14px; padding-left: 6px; font: bold 11px/13px "Noto Sans", sans-serif; color: #0b2f86; background: linear-gradient(90deg, #d8e6fc, #6389d8); border-bottom: 1px solid #fff; }
.recent { display: flex; flex-direction: column; gap: 2px; padding: 6px 0 2px 21px; line-height: 11px; }
.recent a { height: 11px; }
.withicon { display: flex; align-items: center; gap: 1px; padding-left: 6px; height: 12px; }
.withicon svg { width: 14px; height: 12px; }
.open hr { margin: 5px 0 6px 6px; border: 0; border-top: 1px solid #fff; }
.open { padding-bottom: 5px; }

.status { flex: none; height: 14px; display: flex; align-items: center; gap: 2px; padding: 0 2px 0 3px; background: #ece9d8; }
.status span { flex: 1; }
.status i { height: 12px; border: 1px solid #d9d5c3; }
.p14 { width: 14px; } .p18 { width: 18px; } .p20 { width: 20px; } .p22 { width: 22px; } .p24 { width: 24px; } .p84 { width: 84px; }

.taskbar { flex: none; height: 21px; display: flex; align-items: center; color: #fff; background: linear-gradient(#5e9bf2 0, #2a69e2 2px, #235cdb 10px, #2258d2 18px, #1c47af); }
.start { width: 73px; height: 21px; gap: 3px; padding-right: 10px; border-radius: 0 9px 9px 0; color: #fff; font: italic bold 12px/16px "Open Sans", sans-serif; text-shadow: 1px 1px 1px #1b4c1b; background: linear-gradient(#6cb968 0, #3c963c 4px, #3d9b3d 14px, #2c7a2c); }
.start svg { width: 15px; height: 14px; }
.quick { flex: none; width: 76px; display: flex; align-items: center; padding-left: 6px; }
.quick button { width: 17px; }
.quick svg { width: 12px; height: 12px; }
.quick span { margin: 0 0 6px 7px; font-size: 9px; }
.task { width: 119px; height: 18px; justify-content: flex-start; gap: 2px; padding-left: 6px; margin-right: 1px; border-radius: 2px; color: #fff; background: linear-gradient(#5f9bf8, #3c81f3 4px, #3a7df0); }
.task.active { padding-left: 8px; background: #1e50b8; box-shadow: inset 1px 1px 1px #143a8c; }
.lang { margin-left: auto; padding: 0 1px; background: #3f70cf; }
.tray { flex: none; width: 123px; height: 21px; margin-left: 16px; display: flex; align-items: center; gap: 1px; background: linear-gradient(#5cc5f8 0, #1394ea 3px, #1290e8 17px, #0f75c8); }
.tray button { width: 13px; margin-left: -7px; }
.tray svg { width: 12px; height: 12px; }
.tray button svg { width: 14px; height: 14px; }
.tray time { flex: 1; padding-left: 9px; }
```
